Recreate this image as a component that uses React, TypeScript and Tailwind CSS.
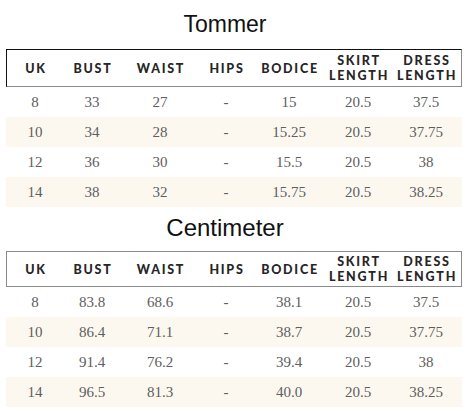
const columns: string[][] = [
  ["UK"],
  ["BUST"],
  ["WAIST"],
  ["HIPS"],
  ["BODICE"],
  ["SKIRT", "LENGTH"],
  ["DRESS", "LENGTH"],
];

const inches = [
  ["8", "33", "27", "-", "15", "20.5", "37.5"],
  ["10", "34", "28", "-", "15.25", "20.5", "37.75"],
  ["12", "36", "30", "-", "15.5", "20.5", "38"],
  ["14", "38", "32", "-", "15.75", "20.5", "38.25"],
];

const centimeters = [
  ["8", "83.8", "68.6", "-", "38.1", "20.5", "37.5"],
  ["10", "86.4", "71.1", "-", "38.7", "20.5", "37.75"],
  ["12", "91.4", "76.2", "-", "39.4", "20.5", "38"],
  ["14", "96.5", "81.3", "-", "40.0", "20.5", "38.25"],
];

// fixed column track so both tables line up the same way
const cols = "grid grid-cols-[58px_56px_80px_52px_74px_64px_72px]";

function SizeTable({ rows, headClass }: { rows: string[][]; headClass: string }) {
  return (
    <div className="ml-[6px] w-[456px]">
      <div className={`${cols} items-center border ${headClass}`}>
        {columns.map((c) => (
          <div
            key={c.join(" ")}
            className="text-center font-['Lato','DejaVu_Sans',sans-serif] text-[12.5px] font-black leading-[15px] tracking-[0.14em] text-[#262626]"
          >
            {c.map((line) => (
              <div key={line}>{line}</div>
            ))}
          </div>
        ))}
      </div>
      {rows.map((r, i) => (
        <div
          key={r[0]}
          className={`${cols} h-[30px] items-center ${i % 2 === 1 ? "bg-[#fcf8f0]" : ""}`}
        >
          {r.map((v, j) => (
            <div
              key={j}
              className="text-center font-['Liberation_Serif',serif] text-[15px] leading-none text-[#5e5e5e]"
            >
              {v}
            </div>
          ))}
        </div>
      ))}
    </div>
  );
}

export default function App() {
  return (
    <div className="h-[411px] w-[470px] bg-white pt-[11px]">
      <h2 className="w-[450px] text-center font-['Liberation_Sans',Arial,sans-serif] text-[23px] leading-[26px] text-[#111]">
        Tommer
      </h2>
      <div className="mt-[12px]">
        <SizeTable
          rows={inches}
          headClass="h-[38px] border-t-[#111] border-l-[#111] border-r-[#8a8a8a] border-b-[#8a8a8a]"
        />
      </div>

      <h2 className="mt-[7px] w-[450px] text-center font-['Liberation_Sans',Arial,sans-serif] text-[24px] leading-[27px] text-[#111]">
        Centimeter
      </h2>
      <div className="mt-[10px]">
        <SizeTable rows={centimeters} headClass="h-[36px] border-[#8a8a8a]" />
      </div>
    </div>
  );
}
